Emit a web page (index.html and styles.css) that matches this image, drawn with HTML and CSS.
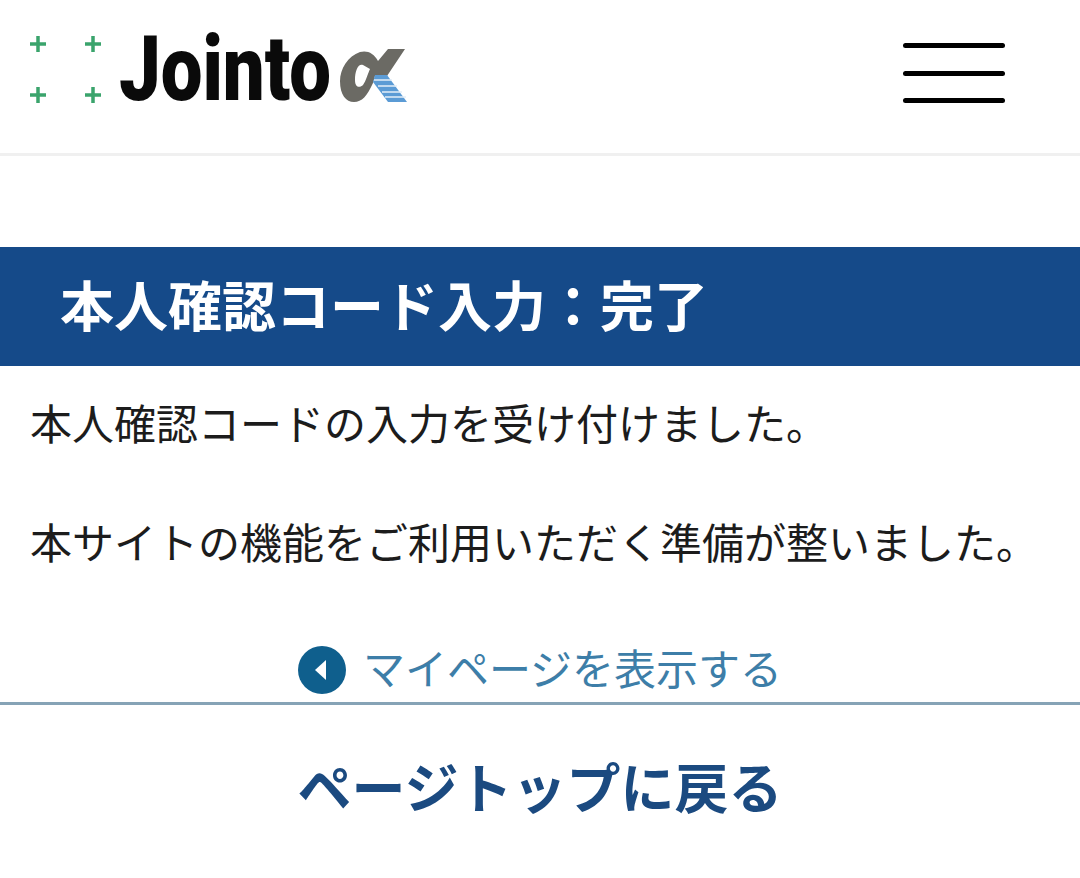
FILE: index.html
```html
<!DOCTYPE html>
<html lang="ja">
<head>
<meta charset="utf-8">
<title>本人確認コード入力：完了</title>
<link rel="stylesheet" href="styles.css">
</head>
<body>
<header class="header">
  <div class="logo">
    <svg class="plus" width="76" height="64" viewBox="0 0 76 64"><path d="M2 9h16M10 1v16M57 9h16M65 1v16M2 60h16M10 52v16M57 60h16M65 52v16" stroke="#3aa46c" stroke-width="3.5" fill="none"/></svg>
    <span class="logo-text">Jointo</span>
    <svg class="alpha" width="68" height="58" viewBox="0 0 68 58"><path fill="#6b6a64" fill-rule="evenodd" d="M65 2H48L38 14C34 6 27 3 20 5 8 9 0 22 0 34 0 48 6 55 14 55 22 55 27 49 33 36L35 29H47ZM23 18C18 16 15 24 15 33 15 41 20 41 23 38 26 34 28 26 30 22Z"/><path fill="#5b9bd5" d="M35 28H47L67 55H48L33 35Z"/><path stroke="#e4eef8" stroke-width="1.5" d="M34 33H52M38 39H57M42 45H62M45 50H66"/></svg>
  </div>
  <button class="menu" aria-label="menu"><span></span><span></span><span></span></button>
</header>
<h1 class="title">本人確認コード入力：完了</h1>
<p class="msg">本人確認コードの入力を受け付けました。</p>
<p class="msg second">本サイトの機能をご利用いただく準備が整いました。</p>
<a class="mypage"><svg width="48" height="48" viewBox="0 0 48 48"><circle cx="24" cy="24" r="24" fill="#0f5f8d"/><path d="M28 14v20L17 24z" fill="#fff"/></svg><span>マイページを表示する</span></a>
<a class="top">ページトップに戻る</a>
</body>
</html>
```
FILE: styles.css
```css
* { box-sizing: border-box; }
html, body { margin: 0; padding: 0; }
body { background: #fff; color: #1c1c1c; font-family: "Noto Sans CJK JP", "Noto Sans", sans-serif; width: 1080px; height: 878px; overflow: hidden; }
.header { height: 156px; border-bottom: 3px solid #f0f0f0; display: flex; justify-content: space-between; align-items: flex-start; padding: 24px 75px 0 28px; }
.logo { display: flex; align-items: flex-start; }
.plus { margin-top: 11px; overflow: visible; }
.logo-text { font-family: Roboto, sans-serif; font-weight: 900; font-size: 90px; line-height: 92px; color: #0a0a0a; margin-left: 15px; transform: scaleX(.825); transform-origin: left; width: 221px; }
.alpha { margin-top: 23px; overflow: visible; }
.menu { width: 102px; height: 60px; margin-top: 19px; background: none; border: 0; padding: 0; display: flex; flex-direction: column; justify-content: space-between; }
.menu span { display: block; height: 5px; background: #000; border-radius: 3px; width: 100%; }
.title { margin: 91px 0 0; height: 119px; background: #154a89; color: #fff; font-size: 54px; font-weight: 700; line-height: 113px; padding-left: 60px; }
.msg { margin: 0; font-size: 42px; line-height: 60px; padding-left: 30px; white-space: nowrap; }
.msg:first-of-type { margin-top: 26px; }
.second { margin-top: 59px; }
.mypage { display: flex; justify-content: center; align-items: center; gap: 17px; color: #3d7ea8; font-size: 42px; border-bottom: 3px solid #86a3b6; height: 74px; margin-top: 60px; }
.mypage svg { margin-top: 7px; }
.top { display: block; text-align: center; color: #1b4a80; font-size: 54px; font-weight: 700; line-height: 60px; margin-top: 51px; }
```
